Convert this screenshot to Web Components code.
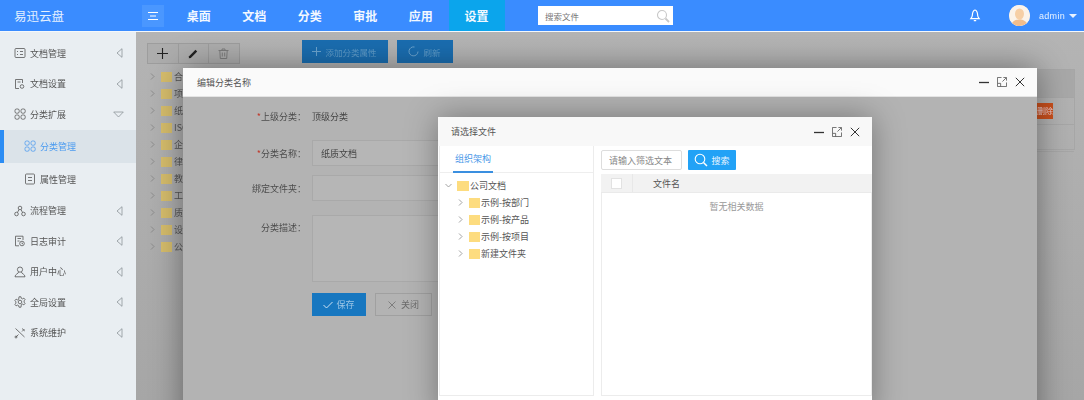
<!DOCTYPE html>
<html lang="zh"><head><meta charset="utf-8"><title>易迅云盘</title>
<style>
html,body{margin:0;padding:0;width:1084px;height:400px;overflow:hidden;background:#fff;font-family:"Noto Sans CJK SC","Liberation Sans",sans-serif;font-size:9px;color:#555}
</style></head><body>
<app-shell>
 <top-bar slot="top"></top-bar>
 <side-bar slot="side"></side-bar>
 <main-pane slot="main"></main-pane>
 <edit-window slot="main"></edit-window>
 <pick-window slot="main"></pick-window>
</app-shell>
<script>
const I={
 doc:'<rect x="1" y="1.5" width="10" height="9" rx="1"/><path d="M3 4.5h1M3 7.5h1M6 4.5h3M6 7.5h3"/>',
 set:'<path d="M8.5 5V1.5h-7v9H5M3.5 4h3"/><circle cx="8" cy="8.5" r="1.8"/>',
 grid:'<rect x="1" y="1" width="4.2" height="4.2" rx="1.5"/><rect x="7" y="1" width="4.2" height="4.2" rx="1.5"/><rect x="1" y="7" width="4.2" height="4.2" rx="1.5"/><rect x="7" y="7" width="4.2" height="4.2" rx="1.5"/>',
 attr:'<rect x="1.5" y="1" width="9" height="10" rx="1"/><path d="M4 4.5h4M4 7.5h4"/>',
 flow:'<circle cx="6" cy="3" r="1.8"/><circle cx="2.5" cy="9" r="1.8"/><circle cx="9.5" cy="9" r="1.8"/><path d="M5 4.5 3.5 7.4M7 4.5 8.5 7.4"/>',
 log:'<path d="M9 5V1.2H1.5v9.6H5M3.5 3.5h3.5M3.5 6h2"/><circle cx="8" cy="8.5" r="2.3"/><path d="M8 7.5v1.2h1"/>',
 user:'<circle cx="6" cy="3.6" r="2.6"/><path d="M4.6 6C4.4 8 1 8 1 10.8h10C11 8 7.6 8 7.4 6"/>',
 gear:'<circle cx="6" cy="6" r="1.8"/><path d="M5 .8h2l.3 1.5 1.3.6 1.3-.8 1.2 1.6-1 1.1v1.4l1 1.1-1.2 1.6-1.3-.8-1.3.6L7 11.2H5l-.3-1.5-1.3-.6-1.3.8L.9 8.3l1-1.1V5.8l-1-1.1 1.2-1.6 1.3.8 1.3-.6z"/>',
 tool:'<path d="M1.5 1.5 10.5 10M10.5 2 8 4.5M4.5 7.5 2 10"/><circle cx="2" cy="10" r="1"/><path d="M8 1.5 10.8 4"/>'
};
function svg(n,s=12){return `<svg width="${s}" height="${s}" viewBox="0 0 12 12" fill="none" stroke="currentColor" stroke-width=".8">${I[n]}</svg>`}
const def=(n,css,html)=>customElements.define(n,class extends HTMLElement{connectedCallback(){if(this.shadowRoot)return;const r=this.attachShadow({mode:'open'});r.innerHTML=`<style>${css}</style>`+(typeof html==='function'?html(this):html)}});

def('app-shell',`:host{display:grid;grid-template:32px 368px/136px 948px;width:1084px;height:400px;overflow:hidden;filter:blur(.3px)}
 .t{grid-column:1/3}.s{display:block;overflow:hidden}.m{position:relative;overflow:hidden;background:linear-gradient(#b4b4b4,#a6a6a6)}`,
 `<div class="t"><slot name="top"></slot></div><div class="s"><slot name="side"></slot></div><div class="m"><slot name="main"></slot></div>`);

def('nav-item',`:host{display:flex;align-items:center;justify-content:center;width:55.5px;height:31px;font:bold 12px "Noto Sans CJK SC",sans-serif;color:#f2f8ff}
 :host([on]){background:#0ba5ec;width:56px}`,`<slot></slot>`);

def('top-bar',`:host{display:flex;align-items:center;height:31px;border-bottom:1px solid #f4f8fc;background:#3a8cff;color:#fff}
 .logo{width:142px;padding-left:14px;box-sizing:border-box;font-size:12.5px;color:#e4f0ff}
 .tg{width:22px;height:22px;background:#4a97ff;display:flex;align-items:center;justify-content:center;margin-right:7px}
 .nav{display:flex;width:338px}
 .gap{width:29px;flex:none}
 .search{width:135px;height:19px;background:#fff;display:flex;align-items:center;justify-content:space-between;padding:0 3px 0 7px;box-sizing:border-box;color:#777;font-size:8.5px;margin-right:296px;flex:none}
 .bell{width:40px;flex:none;display:flex}
 .av{width:21px;height:21px;border-radius:50%;background:#fbeee0;overflow:hidden;margin-right:9px;flex:none}
 .ad{font:9px "Liberation Sans",sans-serif;letter-spacing:.3px;color:#e8f2ff}
 .c{width:0;height:0;border:4px solid transparent;border-top:4px solid #e8f2ff;border-bottom:0;margin-left:4px}`,
 `<div class="logo">易迅云盘</div>
 <div class="tg"><svg width="10" height="8" viewBox="0 0 10 8" stroke="#fff" stroke-width="1"><path d="M0 .5h10M2 4h6M0 7.5h10"/></svg></div>
 <div class="nav"><nav-item>桌面</nav-item><nav-item>文档</nav-item><nav-item>分类</nav-item><nav-item>审批</nav-item><nav-item>应用</nav-item><nav-item on>设置</nav-item></div>
 <div class="gap"></div>
 <div class="search"><span>搜索文件</span><svg width="14" height="14" viewBox="0 0 14 14" fill="none" stroke="#c8c8c8" stroke-width="1.1"><circle cx="6" cy="6" r="4.5"/><path d="M9.5 9.5 13 13" stroke-width="1.8"/></svg></div>
 <div class="bell"><svg width="12" height="13" viewBox="0 0 12 13" fill="none" stroke="#fff" stroke-width="1.2"><path d="M6 1C3.6 1.5 3.5 3.5 3.3 6.5 3.2 8 2.3 9 1.8 9.7h8.4C9.7 9 8.8 8 8.7 6.5 8.5 3.5 8.4 1.5 6 1zM4.8 11.7h2.4"/></svg></div>
 <div class="av"><svg width="21" height="21" viewBox="0 0 21 21"><rect width="21" height="21" fill="#fbf3ea"/><ellipse cx="10.5" cy="9" rx="4.5" ry="5.5" fill="#f6cfa6"/><path d="M2 21c1-5 5-6.5 8.5-6.5S18 16 19 21z" fill="#f2bd8c"/></svg></div>
 <div class="ad">admin</div><div class="c"></div>`);

def('side-item',`:host{display:flex;align-items:center;height:var(--h,30.5px);padding-left:14px;color:#555;font-size:9px;position:relative;box-sizing:border-box}
 :host([sub]){padding-left:24px}
 :host([on]){background:#dbe3e9;color:#4b9bf0;--h:33px;box-shadow:inset 4px 0 #2c8df4}
 .i{display:flex;width:16px;flex:none}
 .a{position:absolute;left:116px;top:50%;margin-top:-5px;display:flex}`,
 h=>{const n=h.getAttribute('icon'),ch=h.getAttribute('ch');
 return `<span class="i">${svg(n)}</span><slot></slot>`+(ch==='l'?`<span class="a"><svg width="7" height="10" viewBox="0 0 7 10" fill="none" stroke="#8d9499" stroke-width=".8"><path d="M6 .7 1 5l5 4.3z"/></svg></span>`:ch==='d'?`<span class="a" style="margin-top:-3px;left:113px"><svg width="11" height="7" viewBox="0 0 11 7" fill="none" stroke="#8d9499" stroke-width=".8"><path d="M.7 1h9.6L5.5 6z"/></svg></span>`:'')});

def('side-bar',`:host{display:flex;flex-direction:column;height:368px;padding-top:6px;box-sizing:border-box;background:#e9eef2}`,
 `<side-item icon="doc" ch="l">文档管理</side-item><side-item icon="set" ch="l">文档设置</side-item><side-item icon="grid" ch="d">分类扩展</side-item><side-item icon="grid" sub on>分类管理</side-item><side-item icon="attr" sub style="--h:33px">属性管理</side-item><side-item icon="flow" ch="l">流程管理</side-item><side-item icon="log" ch="l">日志审计</side-item><side-item icon="user" ch="l">用户中心</side-item><side-item icon="gear" ch="l">全局设置</side-item><side-item icon="tool" ch="l">系统维护</side-item>`);

def('folder-row',`:host{display:flex;align-items:center;height:var(--rh,17px);padding-left:var(--pl,0);color:var(--fc,#555);font-size:9px;white-space:nowrap}
 .f{width:var(--fw,11px);height:10px;background:var(--fb,#d6bd6c);margin:0 var(--fg,2px) 0 5px;flex:none}
 svg{flex:none}`,h=>{const d=h.hasAttribute('open');return `<svg width="7" height="7" viewBox="0 0 7 7" fill="none" stroke="var(--cc,#888)" stroke-width=".9"><path d="${d?'M.5 2 3.5 5 6.5 2':'M2 .5 5 3.5 2 6.5'}"/></svg><span class="f"></span><slot></slot>`});

def('main-pane',`:host{display:block;position:absolute;inset:0}
 .bar{display:flex;align-items:flex-start;padding:8px 0 0 11px;height:36px;box-sizing:border-box;gap:65px}
 .grp{display:flex;height:21px;border:1px solid #9d9d9d;margin-top:3px;background:#adadad;box-sizing:border-box}
 .grp span{width:29.5px;display:flex;align-items:center;justify-content:center;border-right:1px solid #9d9d9d;color:#222}
 .grp span:last-child{border:0}
 .btns{display:flex;gap:9px;margin-left:-3px}
 .b{height:23px;background:#1a6db0;color:#5f9cc9;display:flex;align-items:center;justify-content:center;gap:4px;font-size:8.5px}
 .tree{display:flex;flex-direction:column;padding:0 0 0 13px}
 .tb{position:absolute;left:900px;top:37px;width:39px;height:81px;border:1px solid #a6a6a6;box-sizing:border-box}
 .tb div{height:27px;border-bottom:1px solid #a6a6a6;box-sizing:border-box}
 .tb .h{background:#a8a8a8;height:28px}
 .del{position:absolute;left:0;top:33px;width:16px;height:16px;background:#c9501d;color:#ecc;font-size:8px;line-height:16px;text-align:right;overflow:hidden;white-space:nowrap}`,
 `<div class="bar"><div class="grp"><span><svg width="11" height="11" viewBox="0 0 11 11" stroke="#222" stroke-width="1.1"><path d="M5.5 0v11M0 5.5h11"/></svg></span><span><svg width="10" height="10" viewBox="0 0 10 10" fill="#222"><path d="M7.5.8 9.2 2.5 2.8 8.9.8 9.2 1.1 7.2z"/></svg></span><span><svg width="11" height="11" viewBox="0 0 11 11" fill="none" stroke="#777" stroke-width=".9"><path d="M.5 2.500h10M4 2.500V1h3v1.500M1.800 2.500l.5 8h6.400l.5-8M4.300 4.500v4M6.700 4.500v4"/></svg></span></div>
 <div class="btns"><div class="b" style="width:86px"><svg width="9" height="9" viewBox="0 0 9 9" stroke="#6ba4cf" stroke-width="1"><path d="M4.500 0v9M0 4.500h9"/></svg>添加分类属性</div><div class="b" style="width:56px"><svg width="11" height="11" viewBox="0 0 11 11" fill="none" stroke="#6ba4cf" stroke-width="1"><path d="M6.500 1A4.500 4.500 0 1 0 10 5.500"/></svg>刷新</div></div></div>
 <div class="tree"><folder-row>合同</folder-row><folder-row>项目</folder-row><folder-row>纸质</folder-row><folder-row>ISO</folder-row><folder-row>企业</folder-row><folder-row>律师</folder-row><folder-row>教育</folder-row><folder-row>工程</folder-row><folder-row>质量</folder-row><folder-row>设计</folder-row><folder-row>公司</folder-row></div>
 <div class="tb"><div class="h"></div><div></div><div></div><span class="del">删除</span></div>`);

def('win-ctl',`:host{display:flex;align-items:center;gap:8px}`,`<svg width="10" height="10" viewBox="0 0 10 10" stroke="#333" stroke-width="1.3"><path d="M0 5.500h10"/></svg><svg width="10" height="10" viewBox="0 0 11 11" fill="none" stroke="#555" stroke-width=".9"><path d="M5 .5H.5v10h10V6M7 .5h3.500V4M10 1 6 5M1 7h3v3.500"/></svg><svg width="10" height="10" viewBox="0 0 10 10" stroke="#333" stroke-width="1"><path d="M.8.8l8.400 8.400M9.200.8.8 9.200"/></svg>`);

def('form-row',`:host{display:flex;align-items:var(--al,center);height:var(--h,26px);margin-bottom:var(--mb,9px)}
 .l{width:117px;text-align:right;color:#4c4c4c;padding-right:6px;box-sizing:border-box;flex:none;padding-top:var(--lt,0);font-size:9px}
 .l b{color:#c0392b;font-weight:400}
 .v{flex:1;height:100%;display:flex;align-items:center}
 :host([input]) .v{background:#b6b6b6;border:1px solid #a9a9a9;box-sizing:border-box;padding-left:8px}`,
 h=>`<div class="l">${h.hasAttribute('req')?'<b>*</b>':''}${h.getAttribute('label')}：</div><div class="v"><slot></slot></div>`);

def('edit-window',`:host{display:block;position:absolute;left:47px;top:36px;width:854px;height:400px;background:#b3b3b3;box-shadow:0 0 30px rgba(0,0,0,.4)}
 .h{height:29px;background:#fafafa;display:flex;align-items:center;justify-content:space-between;padding:0 12px 0 14px;color:#555;border-bottom:1px solid #e4e4e4;box-sizing:border-box;font-size:9px}
 form{display:flex;flex-direction:column;padding:6px 0 0 12px;width:650px;color:#444}
 .acts{display:flex;gap:9px;margin:11px 0 0 117px}
 .s,.c{height:23px;display:flex;align-items:center;justify-content:center;gap:3px}
 .s{width:54px;background:#1777c0;color:#9cc6e6}
 .c{width:57px;border:1px solid #a0a0a0;box-sizing:border-box;color:#6b6b6b}`,
 `<div class="h"><span>编辑分类名称</span><win-ctl></win-ctl></div>
 <form><form-row req label="上级分类" style="--mb:11px">顶级分类</form-row>
 <form-row input req label="分类名称">纸质文档</form-row>
 <form-row input label="绑定文件夹" style="--mb:14px"></form-row>
 <form-row input label="分类描述" style="--h:67px;--al:flex-start;--lt:6px;--mb:0"></form-row>
 <div class="acts"><div class="s"><svg width="10" height="8" viewBox="0 0 10 8" fill="none" stroke="#cfe3f3" stroke-width="1"><path d="M.5 4 3.500 7 9.500 1"/></svg>保存</div><div class="c"><svg width="8" height="8" viewBox="0 0 8 8" stroke="#777" stroke-width=".9"><path d="M.5.5l7 7M7.500.5l-7 7"/></svg>&nbsp;关闭</div></div></form>`);

def('pick-window',`:host{display:flex;flex-direction:column;position:absolute;left:302px;top:85px;width:434px;height:300px;background:#fff;box-shadow:0 0 30px rgba(0,0,0,.35);color:#555}
 .h{height:29px;background:#f8f8f8;display:flex;align-items:center;justify-content:space-between;padding:0 12px 0 13px;box-sizing:border-box;flex:none}
 .b{display:flex;gap:7px;padding-left:1px;height:251px;background:#fff}
 .p{border:1px solid #ececec;border-top:0;box-sizing:border-box;height:250px}
 .l{width:155px;flex:none}
 .tab{height:27px;border-bottom:1px solid #eee;box-sizing:border-box;padding-left:13px;display:flex}
 .tab span{height:27px;width:40px;border-bottom:2px solid #3a8fe0;color:#4a98e8;box-sizing:border-box;display:flex;align-items:center;justify-content:center}
 .tr{--fb:#fddc7f;--fc:#555;--cc:#999;--fw:12px;--fg:1px;padding:4px 0 0 5px}
 .kids{--pl:12px;--fw:11px;--fg:1px}
 .r{flex:1;display:flex;flex-direction:column;min-width:0}
 .q{display:flex;gap:6px;padding:4px 0;height:20px}
 .in{width:81px;height:20px;border:1px solid #ddd;border-radius:2px;box-sizing:border-box;padding-left:7px;display:flex;align-items:center;color:#888}
 .go{width:48px;height:20px;background:#22a2f6;color:#e8f5ff;display:flex;align-items:center;justify-content:center;gap:3px;border-radius:1px}
 .th{height:19px;background:#f2f2f2;display:flex;align-items:center;border-bottom:1px solid #eaeaea;box-sizing:border-box;flex:none}
 .ck{width:32px;height:100%;border-right:1px solid #e8e8e8;display:flex;align-items:center;justify-content:center;box-sizing:border-box}
 .ck i{display:block;width:11px;height:11px;background:#fff;border:1px solid #e2e2e2;box-sizing:border-box}
 .nm{margin-left:20px}
 .em{text-align:center;color:#999;padding-top:7px;flex:1;border-left:1px solid #ececec;border-right:1px solid #ececec;border-bottom:1px solid #ececec;margin-bottom:1px}`,
 `<div class="h"><span>请选择文件</span><win-ctl></win-ctl></div>
 <div class="b"><div class="p l"><div class="tab"><span>组织架构</span></div>
 <div class="tr"><folder-row open>公司文档</folder-row><div class="kids"><folder-row>示例-按部门</folder-row><folder-row>示例-按产品</folder-row><folder-row>示例-按项目</folder-row><folder-row>新建文件夹</folder-row></div></div></div>
 <div class="r"><div class="q"><div class="in">请输入筛选文本</div><div class="go"><svg width="14" height="14" viewBox="0 0 14 14" fill="none" stroke="#fff" stroke-width="1.1"><circle cx="6" cy="6" r="4.8"/><path d="M9.5 9.5 13 13" stroke-width="1.5"/></svg>搜索</div></div>
 <div class="th"><div class="ck"><i></i></div><span class="nm">文件名</span></div><div class="em">暂无相关数据</div></div></div>`);
</script>
</body></html>
